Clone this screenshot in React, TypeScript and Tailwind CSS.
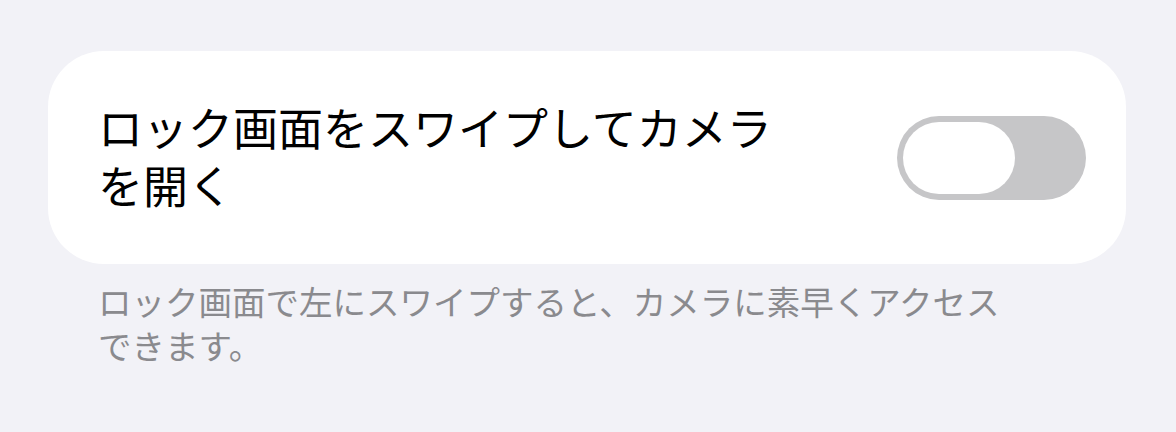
export default function App() {
  return (
    <div
      className="w-[1176px] h-[432px] bg-[#f2f2f7] pt-[51px] pl-[48px] pr-[50px]"
      style={{ fontFamily: '"Noto Sans CJK JP", "Noto Sans", sans-serif' }}
    >
      <div className="flex items-center justify-between h-[213px] bg-white rounded-[56px] pl-[50px] pr-[40px]">
        <div className="w-[700px] text-[45px] leading-[58px] text-black pb-[4px]">
          ロック画面をスワイプしてカメラを開く
        </div>
        <div className="flex items-center w-[189px] h-[84px] rounded-full bg-[#c6c6c8] p-[6px]">
          <div className="w-[112px] h-[72px] rounded-full bg-white" />
        </div>
      </div>
      <div className="mt-[15px] pl-[50px] w-[960px] text-[33.5px] leading-[44px] text-[#8a8a8e]">
        ロック画面で左にスワイプすると、カメラに素早くアクセスできます。
      </div>
    </div>
  );
}
